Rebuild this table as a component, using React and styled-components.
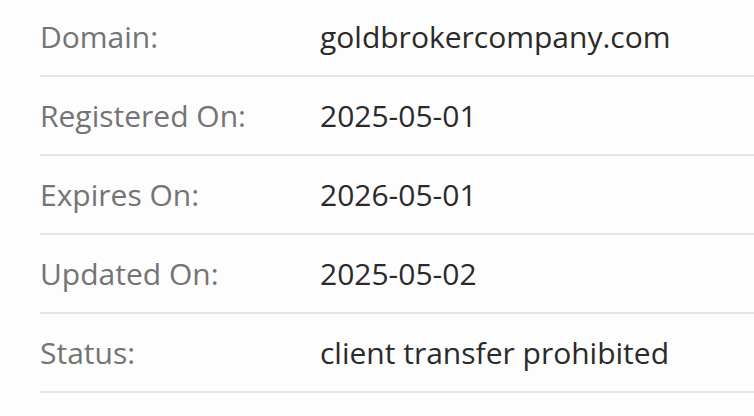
import React from 'react';
import styled, { createGlobalStyle } from 'styled-components';

const GlobalStyle = createGlobalStyle`
  html, body {
    margin: 0;
    padding: 0;
    background: #fdfdfd;
  }
  body {
    font-family: 'Open Sans', 'Liberation Sans', sans-serif;
  }
`;

const Container = styled.div`
  width: 754px;
  height: 416px;
  overflow: hidden;
  padding-left: 40px;
  box-sizing: border-box;
`;

const List = styled.dl`
  margin: -2px 0 0;
`;

const Row = styled.div`
  display: grid;
  grid-template-columns: 280px 1fr;
  align-items: center;
  height: 77px;
  border-bottom: 2px solid #e6e6e6;
`;

const Label = styled.dt`
  margin: 0;
  font-size: 30px;
  color: #747474;
`;

const Value = styled.dd`
  margin: 0;
  font-size: 30px;
  color: #2a2a2a;
`;

const rows = [
  ['Domain:', 'goldbrokercompany.com'],
  ['Registered On:', '2025-05-01'],
  ['Expires On:', '2026-05-01'],
  ['Updated On:', '2025-05-02'],
  ['Status:', 'client transfer prohibited'],
];

const App = () => (
  <>
    <GlobalStyle />
    <Container>
      <List>
        {rows.map(([label, value]) => (
          <Row key={label}>
            <Label>{label}</Label>
            <Value>{value}</Value>
          </Row>
        ))}
      </List>
    </Container>
  </>
);

export default App;
